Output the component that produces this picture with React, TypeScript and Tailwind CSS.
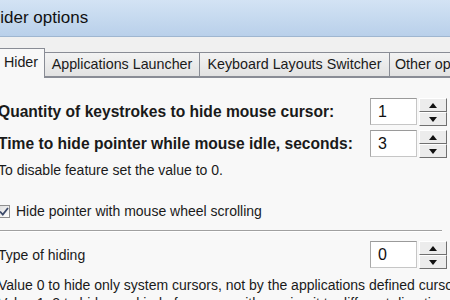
import React from 'react';

function SpinBox({ value }: { value: string }) {
  return (
    <div className="flex items-stretch gap-[2px] shrink-0">
      <div className="w-[47px] h-[27px] bg-white border border-[#c6c6c6] border-t-[#9a9a9a] border-l-[#a8a8a8] flex items-center pl-[7px] text-[16px] text-[#111]">
        {value}
      </div>
      <div className="w-[28px] flex flex-col">
        <SpinButton dir="up" />
        <SpinButton dir="down" />
      </div>
    </div>
  );
}

function SpinButton({ dir }: { dir: 'up' | 'down' }) {
  return (
    <div className="h-[14px] bg-[#ececec] border border-t-white border-l-white border-b-[#707070] border-r-[#707070] flex items-center justify-center">
      <svg width="8" height="5" viewBox="0 0 8 5">
        {dir === 'up' ? <polygon points="0,5 8,5 4,0" fill="#111" /> : <polygon points="0,0 8,0 4,5" fill="#111" />}
      </svg>
    </div>
  );
}

const tabClass =
  'shrink-0 whitespace-nowrap h-[25px] mb-[1px] bg-gradient-to-b from-[#f3f3f3] to-[#e2e2e2] border border-l-0 border-[#898c95] flex items-center text-[14.3px]';

export default function App() {
  return (
    <div className="w-[450px] h-[300px] overflow-hidden bg-[#f0f0f0] font-['Liberation_Sans',Arial,sans-serif] text-[#1a1a1a]">
      {/* title bar */}
      <div className="h-[37px] bg-gradient-to-b from-[#d3e3f4] to-[#b9d0ea] border-b border-[#9fb6d0] flex items-center">
        <span className="ml-[-12px] text-[17px] text-[#111] whitespace-nowrap">Hider options</span>
      </div>

      {/* tabs */}
      <div className="mt-[11px] ml-[-3px] flex items-end h-[30px] relative z-10">
        <div className="shrink-0 w-[48px] h-[30px] bg-[#f8f8f8] border border-b-0 border-[#898c95] flex items-center justify-center text-[14.3px] pb-[2px]">
          Hider
        </div>
        <div className={`${tabClass} w-[155px] justify-center`}>Applications Launcher</div>
        <div className={`${tabClass} w-[190px] justify-center`}>Keyboard Layouts Switcher</div>
        <div className={`${tabClass} w-[110px] pl-[5px]`}>Other options</div>
      </div>

      {/* panel */}
      <div className="mt-[-1px] border-t border-[#898c95] bg-[#f8f8f8] h-[300px] pr-[3px] ml-[-2px] text-[14px]">
        <div className="mt-[20px] h-[28px] flex items-center justify-between">
          <span className="font-bold text-[15.6px] whitespace-nowrap">Quantity of keystrokes to hide mouse cursor:</span>
          <SpinBox value="1" />
        </div>
        <div className="mt-[4px] h-[28px] flex items-center justify-between">
          <span className="font-bold text-[15.6px] whitespace-nowrap">Time to hide pointer while mouse idle, seconds:</span>
          <SpinBox value="3" />
        </div>
        <div className="h-[24px] flex items-center">To disable feature set the value to 0.</div>

        <div className="mt-[17px] h-[24px] flex items-center gap-[6px] ml-[-1px]">
          <div className="w-[13px] h-[13px] border border-[#8f8f8f] bg-gradient-to-br from-[#dcdcdc] to-[#ffffff] flex items-center justify-center">
            <svg width="10" height="9" viewBox="0 0 10 9">
              <path d="M1 4.5 L3.8 7.5 L9 1" stroke="#3c4a6a" strokeWidth="1.8" fill="none" />
            </svg>
          </div>
          <span>Hide pointer with mouse wheel scrolling</span>
        </div>

        <div className="mt-[7px] mr-[5px] border-t border-[#a0a0a0] border-b border-b-white" />

        <div className="mt-[11px] h-[24px] flex items-center justify-between">
          <span>Type of hiding</span>
          <SpinBox value="0" />
        </div>

        <div className="mt-[9px] leading-[18px] whitespace-nowrap">
          <div>Value 0 to hide only system cursors, not by the applications defined cursors.</div>
          <div>Value 1, 2 to hide any kind of cursors, with moving it to different directions.</div>
        </div>
      </div>
    </div>
  );
}
